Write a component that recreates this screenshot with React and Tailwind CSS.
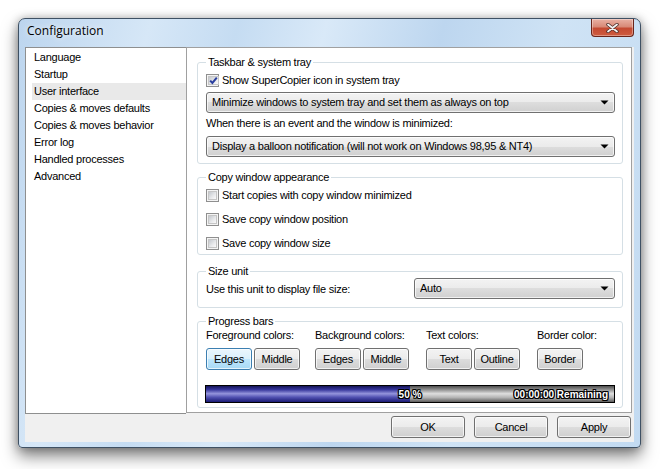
import React from 'react';

const font = "font-['Liberation_Sans',Arial,sans-serif]";

const listItems = [
  'Language',
  'Startup',
  'User interface',
  'Copies & moves defaults',
  'Copies & moves behavior',
  'Error log',
  'Handled processes',
  'Advanced',
];

function CheckBox({ checked, label }) {
  return (
    <div className="flex items-center h-[13px] gap-[3px]">
      <span className="w-[13px] h-[13px] border border-[#8f8f8f] bg-[#f4f4f4] p-[1px] flex shrink-0">
        <span className="flex-1 flex items-center justify-center border border-[#c6c6c6] bg-[linear-gradient(135deg,#c4c8ce,#e9eaec_60%,#fafafa)]">
          {checked && (
            <svg width="9" height="9" viewBox="0 0 9 9">
              <path d="M1.2 4.6 L3.4 7 L7.8 1.6" fill="none" stroke="#2a3f9f" strokeWidth="2" />
            </svg>
          )}
        </span>
      </span>
      <span>{label}</span>
    </div>
  );
}

function Combo({ text, className = '' }) {
  return (
    <div className={`h-[21px] rounded-[3px] border border-[#707070] bg-[linear-gradient(#f3f3f3_0%,#ebebeb_50%,#dddddd_50%,#d0d0d0_100%)] shadow-[inset_0_0_0_1px_rgba(255,255,255,0.7)] flex items-center pl-[5px] pr-[5px] ${className}`}>
      <span className="flex-1 truncate">{text}</span>
      <svg width="9" height="5" viewBox="0 0 9 5">
        <path d="M0.5 0.5 H8.5 L4.5 4.5 Z" fill="#000" />
      </svg>
    </div>
  );
}

function Btn({ children, focused, className = '' }) {
  const look = focused
    ? 'border-[#3c7fb1] bg-[linear-gradient(#eaf6fd_0%,#d9f0fc_50%,#bee6fd_50%,#a7d9f5_100%)]'
    : 'border-[#707070] bg-[linear-gradient(#f3f3f3_0%,#ebebeb_50%,#dddddd_50%,#cfcfcf_100%)]';
  return (
    <div className={`h-[22px] rounded-[3px] border ${look} shadow-[inset_0_0_0_1px_rgba(255,255,255,0.7)] flex items-center justify-center ${className}`}>
      {children}
    </div>
  );
}

function Group({ title, className = '', children }) {
  return (
    <fieldset className={`border border-[#d5dfe5] rounded-[3px] pl-[8px] pr-[7px] ${className}`}>
      <legend className="px-[2px] leading-[13px]">{title}</legend>
      {children}
    </fieldset>
  );
}

const outline = '[text-shadow:1px_0_0_#000,-1px_0_0_#000,0_1px_0_#000,0_-1px_0_#000,1px_1px_0_#000,-1px_-1px_0_#000,1px_-1px_0_#000,-1px_1px_0_#000]';

function ColorCol({ label, buttons, className }) {
  return (
    <div className={className}>
      <div className="h-[13px] leading-[13px]">{label}</div>
      <div className="flex gap-[2px] mt-[6px]">
        {buttons.map((b) => (
          <Btn key={b.text} focused={b.focused} className="w-[46px]">{b.text}</Btn>
        ))}
      </div>
    </div>
  );
}

export default function App() {
  return (
    <div className={`w-[661px] h-[469px] bg-white pt-[18px] pl-[18px] overflow-hidden text-[11px] tracking-[-0.25px] text-black ${font}`}>
      <div className="w-[623px] h-[430px] rounded-t-[7px] rounded-b-[4px] border border-[#3f5164] shadow-[0_8px_16px_rgba(0,0,0,0.5),0_0_8px_rgba(0,0,0,0.25)] bg-[linear-gradient(105deg,#bcd5ee_0%,#d6e7f7_18%,#c5dcf2_30%,#d9e9f8_42%,#bdd6ef_58%,#cfe3f5_74%,#c2daf1_100%)] flex flex-col">
        <div className="h-[28px] flex justify-between items-start pl-[8px] pr-[6px]">
          <span className="mt-[5px] leading-[14px] text-[12px] tracking-normal font-['Open_Sans',sans-serif] [text-shadow:0_0_6px_#fff]">Configuration</span>
          <div className="w-[43px] h-[18px] rounded-b-[4px] border border-t-0 border-[#6a2419] bg-[linear-gradient(#e9b1a4_0%,#d88a78_45%,#c44a32_55%,#cf5c3f_100%)] shadow-[inset_0_0_0_1px_rgba(255,255,255,0.35)] flex items-center justify-center">
            <svg width="13" height="10" viewBox="0 0 13 10">
              <path d="M2 1.5 L11 8.5 M11 1.5 L2 8.5" stroke="#4a2a25" strokeWidth="3.4" strokeLinecap="round" />
              <path d="M2 1.5 L11 8.5 M11 1.5 L2 8.5" stroke="#f4f4f4" strokeWidth="1.8" strokeLinecap="round" />
            </svg>
          </div>
        </div>

        <div className="mx-[6px] h-[395px] bg-[#f0f0f0] flex flex-col">
          <div className="flex items-start h-[367px]">
            <div className="w-[161px] h-[367px] border-l border-t border-b border-[#8e8f8f] bg-white pt-[1px] pl-[6px]">
              {listItems.map((item) => (
                <div
                  key={item}
                  className={`h-[17px] leading-[17px] pl-[2px] ${item === 'User interface' ? 'bg-[#e9e9e9]' : ''}`}
                >
                  {item}
                </div>
              ))}
            </div>

            <div className="w-[446px] h-[366px] border border-[#a0a0a0] bg-white pt-[8px] pl-[10px] pr-[8px]">
              <Group title="Taskbar & system tray" className="pt-[5px] pb-[6px]">
                <CheckBox checked label="Show SuperCopier icon in system tray" />
                <Combo className="mt-[5px]" text="Minimize windows to system tray and set them as always on top" />
                <div className="mt-[4px] h-[13px] leading-[13px]">When there is an event and the window is minimized:</div>
                <Combo className="mt-[6px]" text="Display a balloon notification (will not work on Windows 98,95 & NT4)" />
              </Group>

              <Group title="Copy window appearance" className="mt-[7px] pt-[5px] pb-[4px]">
                <div className="flex flex-col gap-[11px]">
                  <CheckBox label="Start copies with copy window minimized" />
                  <CheckBox label="Save copy window position" />
                  <CheckBox label="Save copy window size" />
                </div>
              </Group>

              <Group title="Size unit" className="mt-[10px] pb-[8px]">
                <div className="flex items-center h-[21px]">
                  <span className="w-[208px] pt-[1px]">Use this unit to display file size:</span>
                  <Combo className="flex-1" text="Auto" />
                </div>
              </Group>

              <Group title="Progress bars" className="mt-[7px] pt-[1px] pb-[4px]">
                <div className="flex">
                  <ColorCol
                    className="w-[109px]"
                    label="Foreground colors:"
                    buttons={[{ text: 'Edges', focused: true }, { text: 'Middle' }]}
                  />
                  <ColorCol
                    className="w-[111px]"
                    label="Background colors:"
                    buttons={[{ text: 'Edges' }, { text: 'Middle' }]}
                  />
                  <ColorCol
                    className="w-[111px]"
                    label="Text colors:"
                    buttons={[{ text: 'Text' }, { text: 'Outline' }]}
                  />
                  <ColorCol className="flex-1" label="Border color:" buttons={[{ text: 'Border' }]} />
                </div>
                <div className="relative mt-[15px] -ml-[1px] h-[18px] border border-black bg-[linear-gradient(#4e4e4e,#8e8e8e_22%,#dedede_48%,#b4b4b4_72%,#5c5c5c)]">
                  <div
                    className="h-full bg-[linear-gradient(#141458,#34349a_22%,#9494dc_48%,#5252b2_70%,#1a1a74)]"
                    style={{ width: '50%' }}
                  />
                  <span className={`absolute inset-0 flex items-center justify-center text-white font-bold text-[10px] tracking-normal ${outline}`}>
                    50 %
                  </span>
                  <span className={`absolute right-[6px] top-0 bottom-0 flex items-center text-white font-bold text-[10px] tracking-normal ${outline}`}>
                    00:00:00 Remaining
                  </span>
                </div>
              </Group>
            </div>
          </div>

          <div className="flex justify-end gap-[9px] pt-[2px] pr-[3px]">
            <Btn className="w-[74px]">OK</Btn>
            <Btn className="w-[74px]">Cancel</Btn>
            <Btn className="w-[74px]">Apply</Btn>
          </div>
        </div>
      </div>
    </div>
  );
}
